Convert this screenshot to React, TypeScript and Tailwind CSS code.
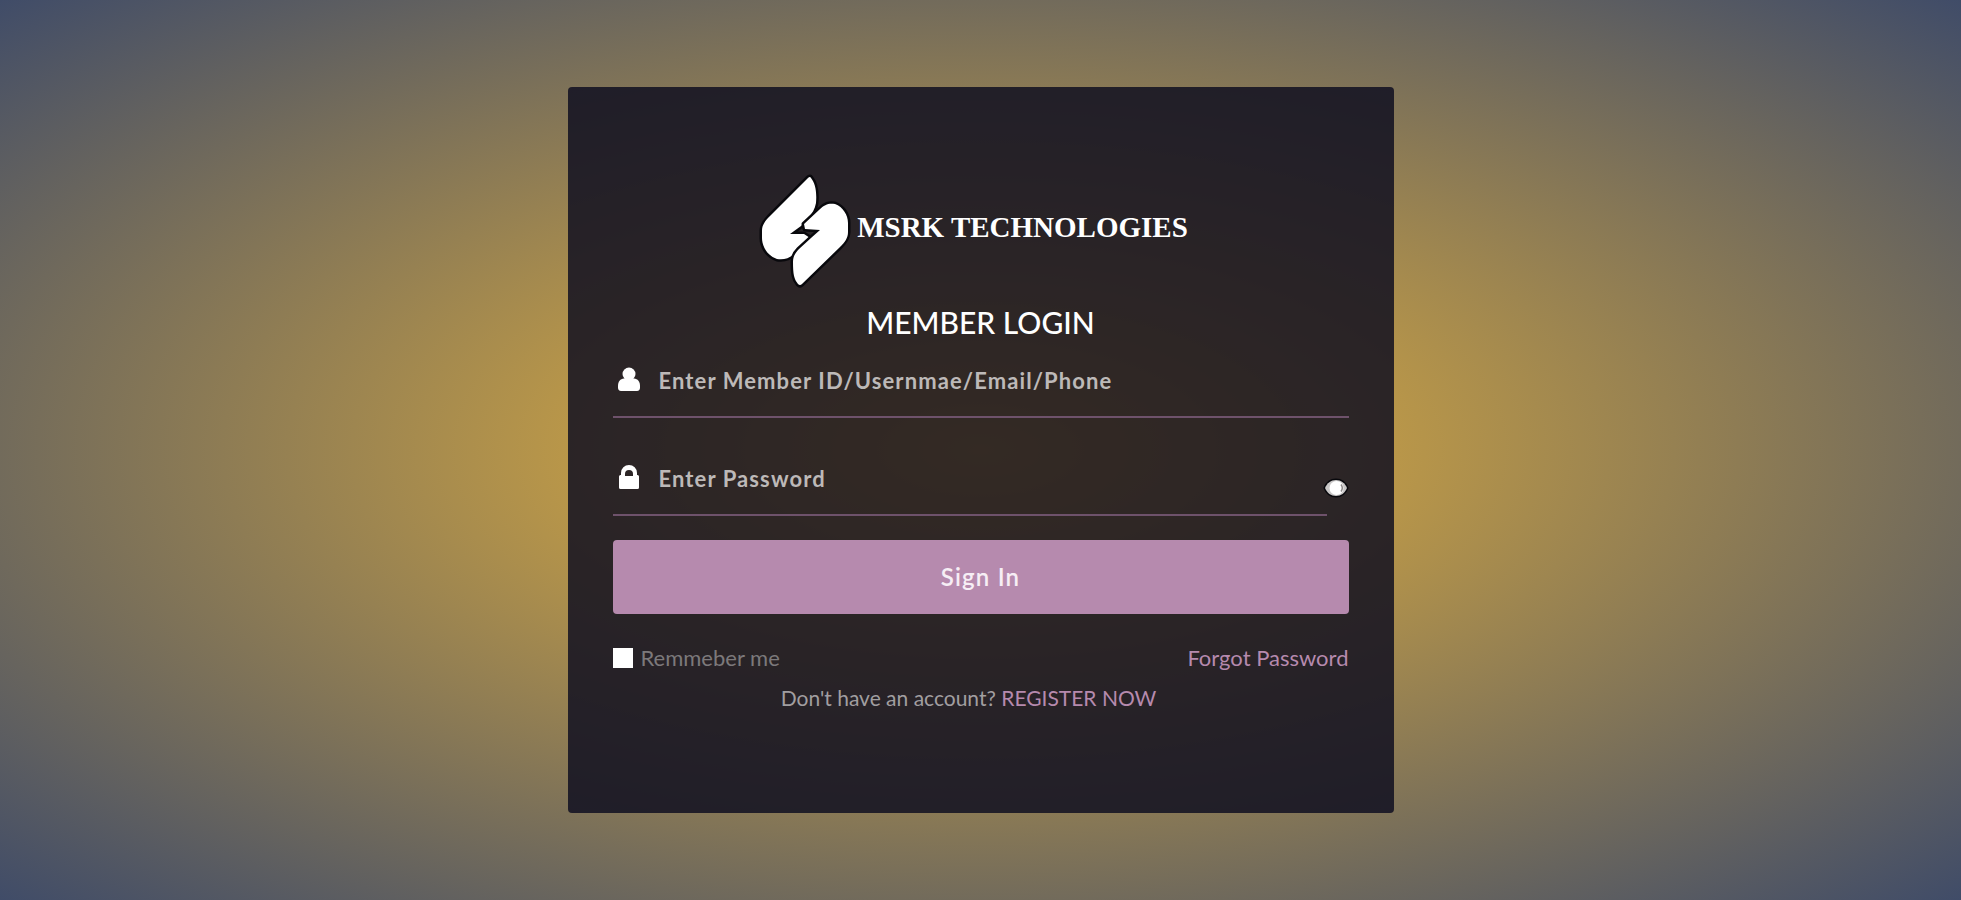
import React, { useState } from "react";

const UserIcon = () => (
  <svg viewBox="0 0 24 24" className="h-6 w-6 shrink-0 fill-white" role="img" aria-label="Member">
    <circle cx="12" cy="7" r="6.5" />
    <path d="M7 11.5c-3.800.4-6 3-6 7.500v1.500c0 2 1 3.500 3 3.500h16c2 0 3-1.500 3-3.500v-1.500c0-4.500-2.200-7.100-6-7.500z" />
  </svg>
);

const LockIcon = () => (
  <svg viewBox="0 0 24 24" className="h-6 w-6 shrink-0 fill-white" role="img" aria-label="Password">
    <path
      fillRule="evenodd"
      d="M4 10V8a8 8 0 0 1 16 0v2h.5A1.500 1.500 0 0 1 22 11.500v11a1.500 1.500 0 0 1-1.500 1.500h-17A1.500 1.500 0 0 1 2 22.500v-11A1.500 1.500 0 0 1 3.500 10zm4 1h8V9a4 4 0 0 0-8 0z"
    />
  </svg>
);

const EyeIcon = () => (
  <svg viewBox="0 0 26 20" className="h-5 w-[26px]" aria-hidden="true">
    <path
      d="M2 10c2-5 6-8 11-8s9 3 11 8c-2 5-6 8-11 8S4 15 2 10z"
      fill="#c9c7c7"
      stroke="#08080c"
      strokeWidth="3"
      paintOrder="stroke"
    />
    <circle cx="13.500" cy="10" r="7" fill="#fff" />
    <path d="M18 6.500c1.500 2 1.500 5 0 7" fill="none" stroke="#8f8b8b" strokeWidth="1.500" />
  </svg>
);

const LogoMark = () => (
  <svg viewBox="0 0 88 110" className="h-[110px] w-[88px] shrink-0 overflow-visible" aria-hidden="true">
    <g fill="#fff" stroke="#08080c" strokeWidth="5" paintOrder="stroke" strokeLinejoin="round">
      <path d="M47 2Q49 0 50 2C54 7 56 15 55 27C54 33 51 38 47 42L40 50L29 58L43 58L49 62L34 77C28 83 22 84 16 83C7 80 1 71 1 62V55C1 49 4 45 9 40Z" />
      <path d="M41 108Q39 110 37 108C33 103 32 98 32 86C32 81 34 77 38 73L50 62L59 54L44 53L43 48L58 34C64 28 68 27 74 28C82 31 87 39 87 47V56C87 62 84 66 79 71Z" />
    </g>
  </svg>
);

export default function App() {
  const [showPassword, setShowPassword] = useState(false);

  return (
    <main className="flex min-h-screen items-center justify-center bg-[radial-gradient(ellipse_at_center,#ecb63c_0%,#404c68_100%)] font-['Lato',sans-serif]">
      <section className="w-full max-w-[826px] rounded bg-[#0b0b1e]/82 px-[45px] pt-[89px] pb-[101px]">
        <div className="flex items-center justify-center gap-2 pr-3">
          <LogoMark />
          <span className="pb-2 font-['Liberation_Serif',serif] text-[29px] leading-8 font-bold text-white">
            MSRK TECHNOLOGIES
          </span>
        </div>

        <h1 className="mt-4 text-center text-[30px] leading-10 font-medium text-white">
          MEMBER LOGIN
        </h1>

        <form onSubmit={(e) => e.preventDefault()}>
          <div className="mt-3 flex h-16 items-center gap-[18px] border-b-2 border-[#6e526b] pb-2 pl-1">
            <label htmlFor="member" className="pb-1">
              <UserIcon />
            </label>
            <input
              id="member"
              type="text"
              placeholder="Enter Member ID/Usernmae/Email/Phone"
              className="w-full bg-transparent text-[22px] leading-8 font-bold tracking-wider text-white outline-none placeholder:text-[#bdb9b8]"
            />
          </div>

          <div className="mt-[34px] flex h-16 items-center">
            <div className="flex h-full flex-1 items-center gap-[18px] border-b-2 border-[#6e526b] pb-2 pl-1">
              <label htmlFor="password" className="pb-1">
                <LockIcon />
              </label>
              <input
                id="password"
                type={showPassword ? "text" : "password"}
                placeholder="Enter Password"
                className="w-full bg-transparent text-[22px] leading-8 font-bold tracking-wider text-white outline-none placeholder:text-[#bdb9b8]"
              />
            </div>
            <button
              type="button"
              aria-label="Show password"
              onClick={() => setShowPassword(!showPassword)}
              className="-ml-1 pt-2"
            >
              <EyeIcon />
            </button>
          </div>

          <button
            type="submit"
            className="mt-6 h-[74px] w-full rounded bg-[#b68aae] text-[24px] font-semibold tracking-wider text-[#f6eef5]"
          >
            Sign In
          </button>

          <div className="mt-7 flex items-center justify-between text-[22px] leading-8">
            <label className="flex items-center gap-2 text-[#7c797b]">
              <input type="checkbox" className="h-5 w-5 appearance-none bg-white checked:bg-[#b68aae]" />
              Remmeber me
            </label>
            <a href="#forgot" className="text-[#b68aae]">
              Forgot Password
            </a>
          </div>
        </form>

        <p className="mt-2.5 pr-6 text-center text-[21px] leading-7 text-[#a19ea0]">
          Don't have an account?{" "}
          <a href="#register" className="text-[#b68aae]">
            REGISTER NOW
          </a>
        </p>
      </section>
    </main>
  );
}
